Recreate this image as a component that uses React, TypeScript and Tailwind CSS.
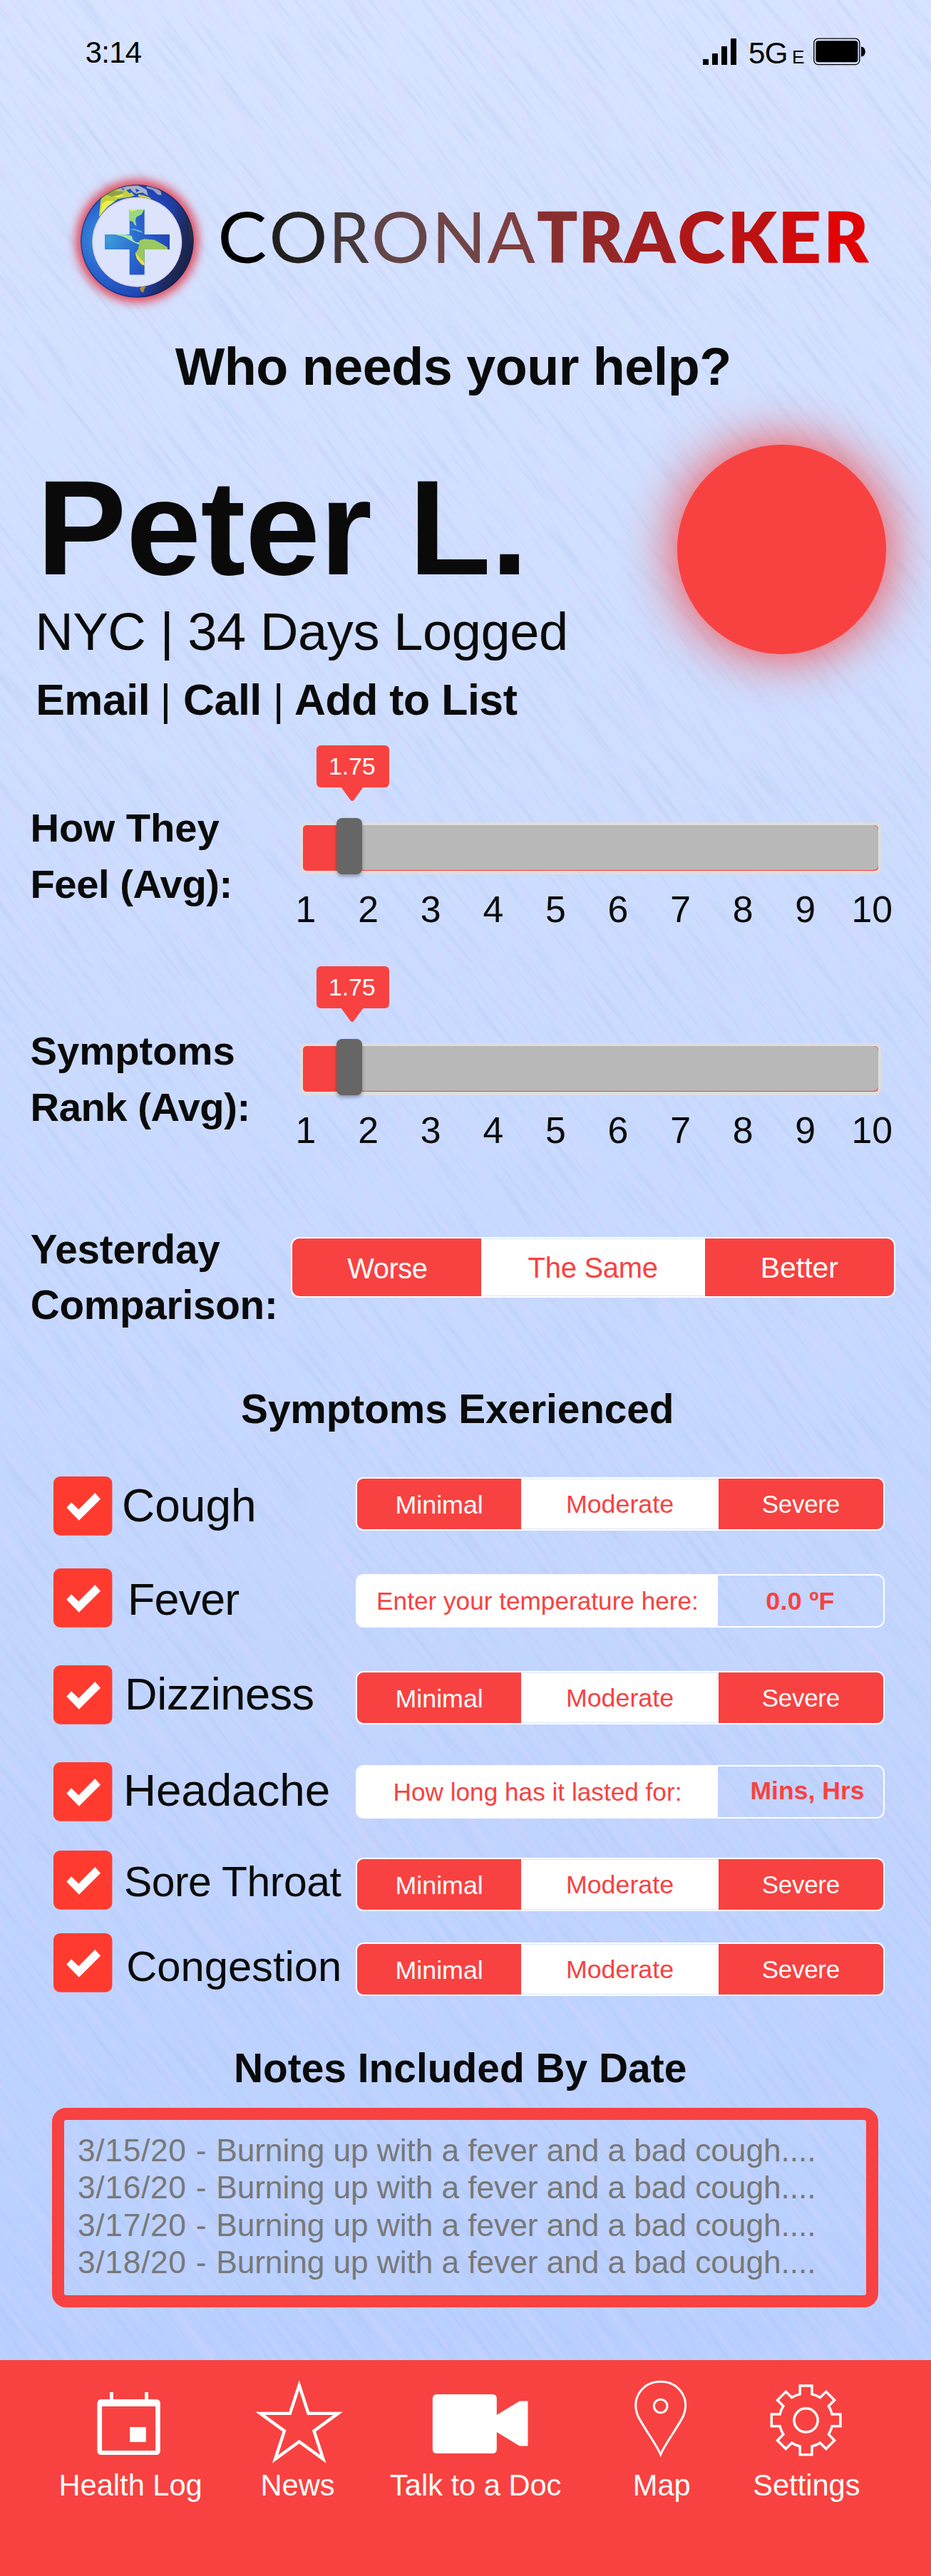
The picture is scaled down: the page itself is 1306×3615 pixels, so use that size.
import React from 'react';

type ToneProps = { tone: 'red' | 'white' | 'clear'; width: string; text: string; children: React.ReactNode };

function Backdrop() {
  return (
    <svg className="pointer-events-none absolute inset-0 -z-10" width="1306" height="3615" aria-hidden="true">
      <defs>
        <linearGradient id="sky" x1="0" y1="0" x2="0" y2="1">
          <stop offset="0" stopColor="#d7e4ff" />
          <stop offset="1" stopColor="#b6ceff" />
        </linearGradient>
        <filter id="streakBlue" x="0" y="0" width="100%" height="100%" colorInterpolationFilters="sRGB">
          <feTurbulence type="fractalNoise" baseFrequency="0.009 0.15" numOctaves="2" seed="7" />
          <feColorMatrix values="0 0 0 0 0.62  0 0 0 0 0.71  0 0 0 0 0.90  2.6 0 0 0 -1.3" />
        </filter>
        <filter id="streakPink" x="0" y="0" width="100%" height="100%" colorInterpolationFilters="sRGB">
          <feTurbulence type="fractalNoise" baseFrequency="0.007 0.1" numOctaves="2" seed="23" />
          <feColorMatrix values="0 0 0 0 0.88  0 0 0 0 0.83  0 0 0 0 0.99  2.6 0 0 0 -1.25" />
        </filter>
      </defs>
      <rect width="1306" height="3615" fill="url(#sky)" />
      <g transform="translate(653 1807) rotate(52) translate(-2000 -2000)">
        <rect width="4000" height="4000" filter="url(#streakPink)" opacity="0.32" />
        <rect width="4000" height="4000" filter="url(#streakBlue)" opacity="0.24" />
      </g>
    </svg>
  );
}

function StatusBar() {
  return (
    <div className="mt-[44px] flex h-[60px] items-start pl-[119.7px] leading-[60px] text-black">
      <div className="w-[866.3px] text-[41.7px] tracking-[-0.6px]">3:14</div>
      <svg className="mt-[10px]" width="47" height="37" viewBox="0 0 47 37">
        <rect x="0" y="29" width="8" height="8" />
        <rect x="13" y="21" width="8" height="16" />
        <rect x="26" y="11" width="8" height="26" />
        <rect x="39" y="0" width="8" height="37" />
      </svg>
      <div className="mt-[1px] ml-[17px] w-[61px] text-[42.1px] tracking-[-0.7px]">5G</div>
      <div className="mt-[6px] w-[30px] text-[26.3px]">E</div>
      <svg className="mt-[9px]" width="74" height="39" viewBox="0 0 74 39">
        <rect x="0.8" y="1.2" width="64" height="36.4" rx="6" fill="none" stroke="#000" strokeWidth="1.3" />
        <rect x="3.4" y="4.2" width="59" height="30" rx="3.5" />
        <path d="M67 12.5c3.5 0 5.800 3.300 5.800 7s-2.300 7-5.800 7z" />
      </svg>
    </div>
  );
}

function Land() {
  return (
    <>
      <path fill="#c3cf3c" d="M146 222l8-72 14-22 34-20 40-8 40 18 14 16-24 6-46 8-30 20-26 18-16 30z" />
      <path fill="#eef04a" d="M152 215l6-46 22-14 34 2-28 20-20 22zM190 128l36-6 28 12-30 8z" />
      <path fill="#8fa34a" d="M176 130l30-16 50 2-20 14-36 8z" />
      <path fill="#a9b2c8" d="M226 104l40-12 44-3 36 20 8 26-24-14-26 4-34-16-30 6z" />
      <path fill="#1f50c8" d="M262 112l16-8 10 12-12 8zM300 104l18 8-14 8zM240 106l10-4 4 8z" />
      <path fill="#97a3c4" d="M346 92l32 4 28 18 4 18-16-2-20-20-26-8z" />
      <path fill="#c6cd42" d="M312 128l22 4 24 8 10 8-30-2-26-8z" />
      <path fill="#98d884" d="M274 190h64l-12 22-22 12-4 12 4 26-8-6-8-14-14-2z" />
      <path fill="#d9e66a" d="M276 190l34 2-20 8-14-2z" />
      <path fill="#5fb7c8" d="M282 274l16 0 26 8 8 8-20-4-14-6-16-2z" />
      <path fill="#a0e8a4" d="M214 297l40 0 30 6 6 18 14 10 14-2-4 10-20-8-24-14-20-10z" />
      <path fill="#9cc860" d="M318 322l20-6 42 4 26 14 28 16 2 12-96 4v60l-10-4-20-24-10-22 12-18z" />
      <path fill="#f2e04a" d="M298 372l12 14 14 18 14 12v12l-12-4-20-24z" />
      <path fill="#c09a2c" d="M318 524l10-8 18-2-8 12-4 16-10-4z" />
      <path fill="#556b2c" d="M530 240l14 30 4 76-12-16-10-50z" />
    </>
  );
}

function Globe() {
  return (
    <svg className="ml-[92px]" width="200" height="200" viewBox="92 238 200 200">
      <defs>
        <radialGradient id="sea" cx="0.24" cy="0.48" r="0.82">
          <stop offset="0" stopColor="#3d9cdc" />
          <stop offset="0.35" stopColor="#2a66cf" />
          <stop offset="0.7" stopColor="#1f43b4" />
          <stop offset="1" stopColor="#23306e" />
        </radialGradient>
        <linearGradient id="night" x1="0.3" y1="0.35" x2="0.95" y2="0.62">
          <stop offset="0.6" stopColor="#161c40" stopOpacity="0" />
          <stop offset="0.85" stopColor="#1d2448" stopOpacity="0.7" />
          <stop offset="1" stopColor="#1a2040" stopOpacity="0.85" />
        </linearGradient>
        <filter id="halo" x="-30%" y="-30%" width="160%" height="160%">
          <feGaussianBlur stdDeviation="7" />
        </filter>
        <clipPath id="ring">
          <path clipRule="evenodd" d="M307 87a238 238 0 1 0 .01 0zM307 140a189 189 0 1 1-.01 0z" />
        </clipPath>
        <clipPath id="cross">
          <path d="M275 192h63v105h106v63H338v107h-63V360H171v-63h104z" />
        </clipPath>
      </defs>
      <circle cx="192.300" cy="338.300" r="86" fill="#e2495a" filter="url(#halo)" />
      <g transform="translate(90 230) scale(0.33333)">
        <circle cx="307" cy="329" r="192" fill="#dce3fc" />
        <circle cx="307" cy="329" r="186" fill="none" stroke="#e6cfe4" strokeWidth="6" opacity="0.7" />
        <g clipPath="url(#ring)">
          <circle cx="307" cy="325" r="238" fill="url(#sea)" />
          <Land />
          <circle cx="307" cy="325" r="238" fill="url(#night)" />
          <circle cx="307" cy="325" r="236" fill="none" stroke="#14205a" strokeWidth="6" opacity="0.5" />
        </g>
        <g clipPath="url(#cross)">
          <circle cx="307" cy="325" r="238" fill="url(#sea)" />
          <Land />
        </g>
      </g>
    </svg>
  );
}

/* letter, left edge, side bearing, horizontal scale, colour */
type Letter = [string, number, number, number, string];
const thin: Letter[] = [
  ['C', 310, 4.6, 1.05, '#000000'],
  ['O', 382, 4.6, 1.045, '#21201f'],
  ['R', 469, 8.3, 0.92, '#44383a'],
  ['O', 525.5, 4.6, 1.045, '#644546'],
  ['N', 614, 8.3, 1.02, '#704546'],
  ['A', 684, 0.4, 1.01, '#7d3f40'],
];
const heavy: Letter[] = [
  ['T', 754, 1, 0.96, '#883030'],
  ['R', 818, 6.6, 0.97, '#932829'],
  ['A', 875.5, -0.6, 1.02, '#a21f21'],
  ['C', 953, 2.5, 1.03, '#b01718'],
  ['K', 1027, 6.6, 1, '#be1112'],
  ['E', 1098, 6.6, 1.09, '#cf0b0c'],
  ['R', 1162, 6.6, 0.97, '#e20303'],
];

function Letters({ set }: { set: Letter[] }) {
  return (
    <>
      {set.map(([ch, left, bearing, sx, color], i) => (
        <text key={i} transform={`translate(${left} 369) scale(${sx} 1)`} x={-bearing} fill={color}>{ch}</text>
      ))}
    </>
  );
}

function Wordmark() {
  return (
    <svg className="ml-[8px]" width="940" height="200" viewBox="300 238 940 200" fontFamily="Lato, sans-serif" fontSize="98.500">
      <g fontWeight="400"><Letters set={thin} /></g>
      <g fontWeight="800"><Letters set={heavy} /></g>
    </svg>
  );
}

function Slider({ top, second, labelClass }: { top: string; second: string; labelClass: string }) {
  return (
    <section className="flex h-[310px]">
      <h3 className={`w-[421.3px] pl-[42.5px] text-[56.2px] leading-[79px] font-bold ${labelClass}`}>
        <span className="block">{top}</span>
        <span className="block tracking-[-0.45px]">{second}</span>
      </h3>
      <div className="relative w-[815px] pt-[107.7px]">
        <div className="absolute top-0 left-[23px] h-[58.7px] w-[102px] rounded-[6px] bg-[#f74241] pr-[3px] text-center text-[34px] leading-[59px] tracking-[-0.1px] text-white">
          1.75
          <svg className="absolute top-[58px] left-[34px]" width="32" height="21" viewBox="0 0 32 21">
            <path fill="#f74241" d="M0 0h32l-13.500 18.500q-2.500 3-5 0z" />
          </svg>
        </div>
        <div className="relative flex h-[73.3px] rounded-[8px] bg-[#dedede] px-[4px] pt-[4.300px] pb-[5px]">
          <div className="flex w-full rounded-[5px] bg-[#f74241]">
            <div className="w-[60px]" />
            <div className="my-[0.5px] flex-1 rounded-r-[7px] bg-[#b8b8b8]" />
          </div>
          <div className="absolute -top-[6px] left-[50.5px] h-[79.500px] w-[36px] rounded-[8px] bg-[#666666] shadow-[0_3px_5px_rgba(0,0,0,0.3)]" />
        </div>
        <div className="mt-[19px] -ml-[36.1px] flex text-[51.8px] leading-[60px]">
          {[1, 2, 3, 4, 5, 6, 7, 8, 9].map((n) => (
            <div key={n} className="w-[87.6px] shrink-0 text-center">{n}</div>
          ))}
          <div className="pl-[21px]">10</div>
        </div>
      </div>
    </section>
  );
}

function Cell({ tone, width, text, children }: ToneProps) {
  const tones = {
    red: 'bg-[#f74241] text-white',
    white: 'bg-white text-[#f74241]',
    clear: 'text-[#f74241] font-bold',
  };
  return <div className={`flex h-full items-center justify-center whitespace-nowrap ${tones[tone]} ${width} ${text}`}>{children}</div>;
}

function SeverityBar({ offset }: { offset: string }) {
  return (
    <div className={`flex h-[75px] w-[742px] overflow-hidden rounded-[11px] border-2 border-white ${offset}`}>
      <Cell tone="red" width="w-[230.3px]" text="text-[35.8px] pt-[4px]">Minimal</Cell>
      <Cell tone="white" width="w-[276.4px] border-y border-[#d9e4ff]" text="text-[35.8px] pt-[2px]">Moderate</Cell>
      <Cell tone="red" width="w-[231.3px]" text="text-[35px] tracking-[-0.3px] pt-[2px]">Severe</Cell>
    </div>
  );
}

function QuestionBar({ offset, question, value, nudge }: { offset: string; question: string; value: string; nudge: string }) {
  return (
    <div className={`flex h-[75px] w-[742px] overflow-hidden rounded-[11px] border-2 border-white ${offset}`}>
      <Cell tone="white" width="w-[506px]" text="text-[35.2px] pt-[2px]">{question}</Cell>
      <Cell tone="clear" width="w-[232px]" text={nudge}>{value}</Cell>
    </div>
  );
}

function SymptomRow({ gap, label, labelClass, children }: { gap: string; label: string; labelClass: string; children: React.ReactNode }) {
  return (
    <div className={`flex h-[83px] items-start pl-[75px] ${gap}`}>
      <svg className="shrink-0" width="83" height="83" viewBox="0 0 83 83">
        <rect width="82.400" height="82.700" rx="9.500" fill="#ff3b30" />
        <path fill="#fff" d="M18.300 43.700L25 36.300l10.300 10L58.300 23l7.700 8.700-30.200 30z" />
      </svg>
      <div className={`h-[83px] w-[341px] leading-[83px] whitespace-nowrap ${labelClass}`}>{label}</div>
      {children}
    </div>
  );
}

function NavItem({ className, x, label, children }: { className: string; x: number; label: string; children: React.ReactNode }) {
  return (
    <div className={`flex flex-col items-center ${className}`}>
      <svg className="overflow-visible" width="80" height="126" viewBox={`${x} 3336 80 126`} fill="none" stroke="#fff">
        {children}
      </svg>
      <div className="mt-[1px] text-[41.6px] leading-[50px] whitespace-nowrap text-white">{label}</div>
    </div>
  );
}

function polar(r: number, deg: number) {
  const a = ((deg - 90) * Math.PI) / 180;
  return `${(r * Math.cos(a)).toFixed(2)} ${(r * Math.sin(a)).toFixed(2)}`;
}
const gear =
  Array.from({ length: 8 }, (_, i) => {
    const d = i * 45;
    return `${i ? 'L' : 'M'}${polar(37.5, d - 13)}L${polar(49, d - 9.800)}L${polar(49, d + 9.800)}L${polar(37.5, d + 13)}A37.5 37.5 0 0 1 ${polar(37.5, d + 32)}`;
  }).join('') + 'Z';
const star = Array.from({ length: 10 }, (_, i) => polar(i % 2 ? 21.9 : 57.3, i * 36)).join('L');

export default function App() {
  return (
    <main className="relative isolate flex h-[3615px] w-[1306px] flex-col overflow-hidden font-['Liberation_Sans',Arial,sans-serif] text-[#0a0a0a]">
      <Backdrop />
      <StatusBar />

      <header className="mt-[134px] flex h-[200px]">
        <Globe />
        <Wordmark />
      </header>

      <h1 className="mt-[36.5px] pl-[245.700px] text-[73.7px] leading-[80px] font-bold tracking-[-0.5px] whitespace-nowrap">Who needs your help?</h1>

      <section className="flex h-[462px] whitespace-nowrap">
        <div className="w-[950px]">
          <h2 className="mt-[91px] pl-[51.5px] text-[188.7px] leading-[190px] font-bold tracking-[-0.4px]">Peter L.</h2>
          <p className="mt-[11px] pl-[49.2px] text-[74.1px] leading-[80px] tracking-[-0.45px]">NYC | 34 Days Logged</p>
          <div className="mt-[20px] flex pl-[50.2px] text-[60.8px] leading-[70px] font-bold tracking-[-0.45px]">
            <a className="w-[174.2px]">Email</a>
            <span className="w-[32.7px] font-normal">|</span>
            <a className="w-[125.6px]">Call</a>
            <span className="w-[30.4px] font-normal">|</span>
            <a>Add to List</a>
          </div>
        </div>
        <div className="mt-[69.8px] h-[293.5px] w-[293px] rounded-full bg-[#f74241] shadow-[0_0_75px_2px_#f74241]" />
      </section>

      <div className="mt-[29.5px]">
        <Slider top="How They" second="Feel (Avg):" labelClass="pt-[75.8px]" />
        <Slider top="Symptoms" second="Rank (Avg):" labelClass="pt-[78.8px]" />
      </div>

      <section className="mt-[49.4px] flex h-[156px]">
        <h3 className="w-[408px] pl-[42.8px] text-[56.6px] leading-[78px] font-bold tracking-[-0.2px]">
          Yesterday
          <br />
          Comparison:
        </h3>
        <div className="mt-[20.6px] flex h-[85px] w-[848px] overflow-hidden rounded-[12px] border-2 border-white">
          <Cell tone="red" width="w-[264.7px]" text="text-[39.9px] tracking-[-0.45px] pt-[4px] pl-[2px]">Worse</Cell>
          <Cell tone="white" width="w-[314px] border-y border-[#d9e4ff]" text="text-[40px] tracking-[-0.3px] pt-[2px]">The Same</Cell>
          <Cell tone="red" width="w-[265.3px]" text="text-[40.9px] pt-[2px]">Better</Cell>
        </div>
      </section>

      <h3 className="mt-[71.5px] h-[69.4px] pl-[338.100px] text-[56.8px] leading-[70px] font-bold tracking-[-0.1px]">Symptoms Exerienced</h3>

      <section className="pt-[59.7px]">
        <SymptomRow gap="" label="Cough" labelClass="pl-[13px] text-[64px]">
          <SeverityBar offset="mt-[1px]" />
        </SymptomRow>
        <SymptomRow gap="mt-[46px]" label="Fever" labelClass="mt-[2px] pl-[21.1px] text-[62.7px] tracking-[-0.8px]">
          <QuestionBar offset="mt-[8px]" question="Enter your temperature here:" value="0.0 ºF" nudge="text-[35.8px] pt-[2px] pr-[1px] tracking-[0.3px]" />
        </SymptomRow>
        <SymptomRow gap="mt-[53px]" label="Dizziness" labelClass="-mt-[0.5px] pl-[17.1px] text-[63.1px] tracking-[-0.5px]">
          <SeverityBar offset="mt-[8px]" />
        </SymptomRow>
        <SymptomRow gap="mt-[53px]" label="Headache" labelClass="-mt-[2px] pl-[15px] text-[63.8px] tracking-[-0.1px]">
          <QuestionBar offset="mt-[4px]" question="How long has it lasted for:" value="Mins, Hrs" nudge="text-[35.6px] pb-[2px] pl-[19px]" />
        </SymptomRow>
        <SymptomRow gap="mt-[41px]" label="Sore Throat" labelClass="mt-[2.5px] pl-[15.9px] text-[58.8px] tracking-[-0.45px]">
          <SeverityBar offset="mt-[10px]" />
        </SymptomRow>
        <SymptomRow gap="mt-[33px]" label="Congestion" labelClass="mt-[4.8px] pl-[19.2px] text-[59.7px]">
          <SeverityBar offset="mt-[13px]" />
        </SymptomRow>
      </section>

      <h3 className="mt-[71px] pl-[327.900px] text-[56.9px] leading-[70px] font-bold">Notes Included By Date</h3>

      <section className="mt-[21px] ml-[72.5px] h-[280.3px] w-[1159.5px] rounded-[20px] border-[17.7px] border-[#f74241] pt-[17px] pl-[19.5px] text-[44.3px] leading-[52.3px] tracking-[-0.08px] whitespace-nowrap text-[#787878]">
        {['3/15/20', '3/16/20', '3/17/20', '3/18/20'].map((date) => (
          <p key={date}>
            <span className="tracking-[0.7px]">{date} - </span>
            Burning up with a fever and a bad cough....
          </p>
        ))}
      </section>

      <nav className="mt-auto flex h-[302.700px] items-start bg-[#f74241] pt-[23.7px] pl-[82.500px]">
        <NavItem className="w-[201.3px]" x={143.2} label="Health Log">
          <path fill="#fff" stroke="none" fillRule="evenodd" d="M142.600 3367h76.400q6 0 6 6v66q0 6-6 6h-76.400q-6 0-6-6v-66q0-6 6-6zM143.300 3377v62h75v-62zM154.200 3357h4.900v10h-4.900zM203.300 3357h4.900v10h-4.900zM182.400 3406h22.600v21h-22.600z" />
        </NavItem>
        <NavItem className="ml-[82px] w-[103.5px]" x={377.5} label="News">
          <path d={`M${star}Z`} transform="translate(419.200 3404.600)" strokeWidth="4.400" strokeMiterlimit="10" />
        </NavItem>
        <NavItem className="ml-[78.1px] w-[239.6px]" x={627.2} label="Talk to a Doc">
          <path fill="#fff" stroke="none" d="M613 3360h78q6 0 6 6v23l32-19.500h11.700v63H729L697 3413v24q0 6-6 6h-78q-6 0-6-6v-71q0-6 6-6z" />
        </NavItem>
        <NavItem className="ml-[100px] w-[82.6px]" x={888.3} label="Map">
          <path strokeWidth="3" d="M927 3444.500C921 3430 902 3405 895 3390C885 3364 903 3342.300 927 3342.300S969 3364 959 3390C952 3405 933 3430 927 3444.500z" />
          <circle cx="927" cy="3376.500" r="9.300" strokeWidth="3" />
        </NavItem>
        <NavItem className="ml-[86.900px] w-[149.8px]" x={1091.4} label="Settings">
          <g transform="translate(1131 3396.400)" strokeWidth="3.500">
            <path d={gear} />
            <circle r="16.600" />
          </g>
        </NavItem>
      </nav>
    </main>
  );
}
